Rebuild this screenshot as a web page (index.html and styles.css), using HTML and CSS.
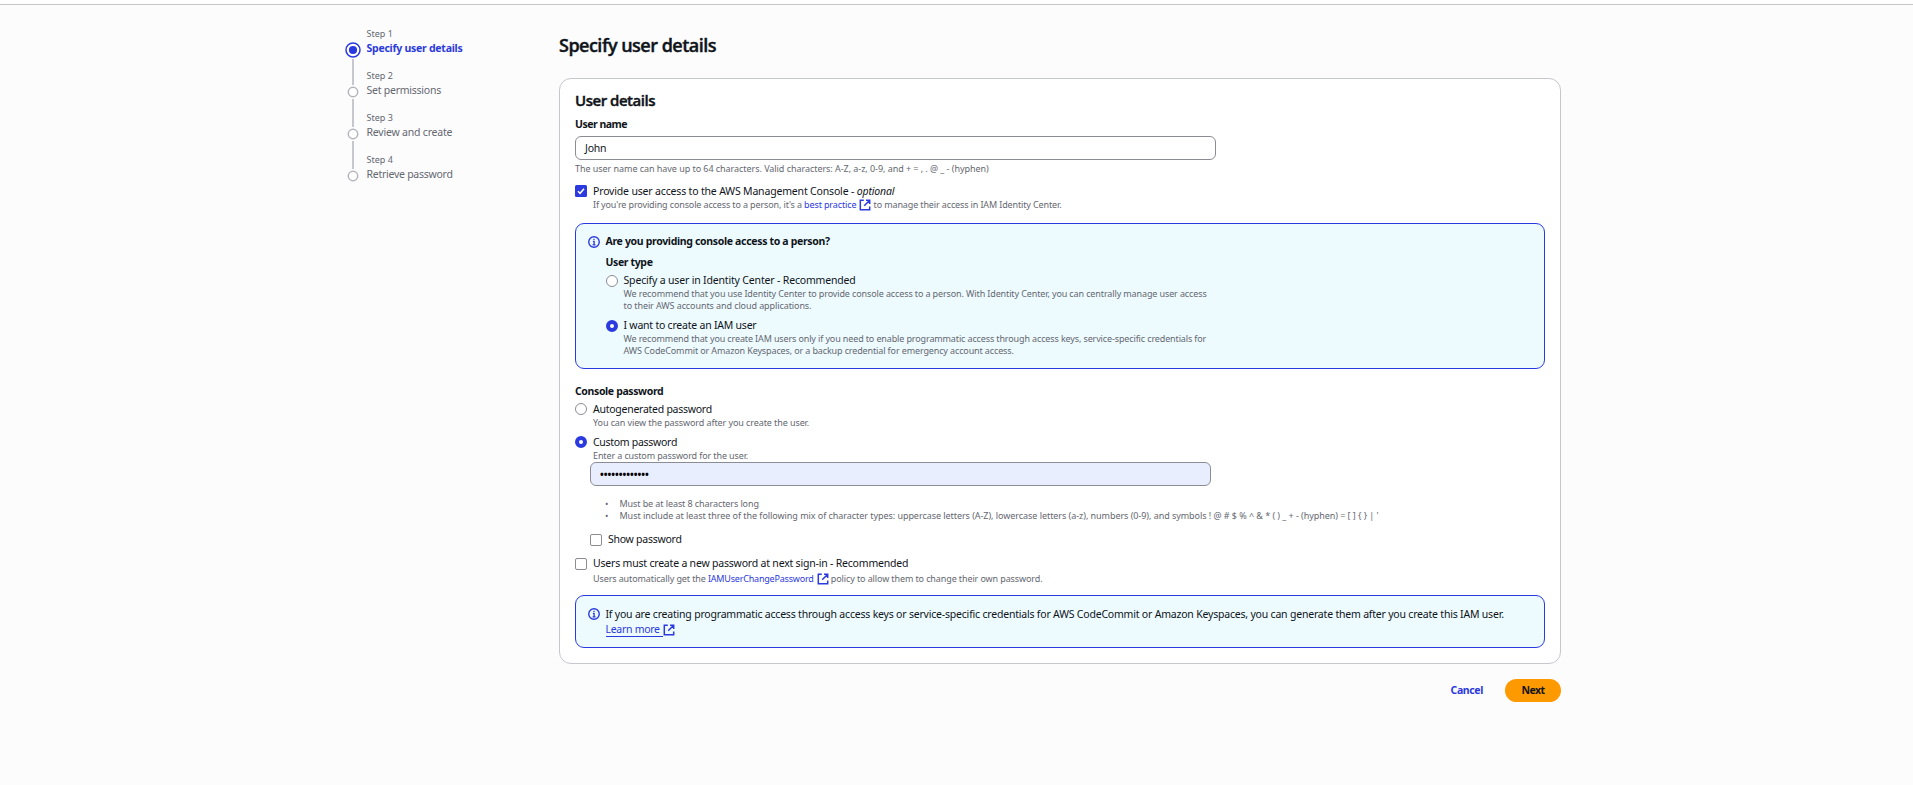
FILE: index.html
```
<!DOCTYPE html>
<html lang="en">
<head>
<meta charset="utf-8">
<title>Specify user details</title>
<link rel="stylesheet" href="styles.css">
</head>
<body>
<div class="topbar"></div>
<div class="layout">
  <nav class="steps">
    <div class="step active">
      <div class="rail"><svg class="dot" width="16" height="16" viewBox="0 0 16 16"><circle cx="8" cy="8" r="7" fill="#fff" stroke="#2b3ade" stroke-width="1.5"/><circle cx="8" cy="8" r="4.1" fill="#2b3ade"/></svg><span class="line"></span></div>
      <div class="step-text"><div class="step-no">Step 1</div><div class="step-name t26">Specify user details</div></div>
    </div>
    <div class="step">
      <div class="rail"><svg class="dot" width="12" height="12" viewBox="0 0 12 12"><circle cx="6" cy="6" r="4.7" fill="#fff" stroke="#b4b4bb" stroke-width="1.5"/></svg><span class="line"></span></div>
      <div class="step-text"><div class="step-no">Step 2</div><div class="step-name t24">Set permissions</div></div>
    </div>
    <div class="step">
      <div class="rail"><svg class="dot" width="12" height="12" viewBox="0 0 12 12"><circle cx="6" cy="6" r="4.7" fill="#fff" stroke="#b4b4bb" stroke-width="1.5"/></svg><span class="line"></span></div>
      <div class="step-text"><div class="step-no">Step 3</div><div class="step-name t20">Review and create</div></div>
    </div>
    <div class="step last">
      <div class="rail"><svg class="dot" width="12" height="12" viewBox="0 0 12 12"><circle cx="6" cy="6" r="4.7" fill="#fff" stroke="#b4b4bb" stroke-width="1.5"/></svg></div>
      <div class="step-text"><div class="step-no">Step 4</div><div class="step-name t26">Retrieve password</div></div>
    </div>
  </nav>

  <main class="main">
    <h1>Specify user details</h1>
    <section class="card">
      <h2>User details</h2>
      <div class="label t50">User name</div>
      <div class="input name-input t20">John</div>
      <p class="hint name-hint t05">The user name can have up to 64 characters. Valid characters: A-Z, a-z, 0-9, and + = , . @ _ - (hyphen)</p>

      <div class="choice access">
        <svg class="box" width="12" height="12" viewBox="0 0 12 12"><rect width="12" height="12" rx="1.5" fill="#2b3ade"/><path d="M3 6.2 5.1 8.3 9 3.8" fill="none" stroke="#fff" stroke-width="1.5"/></svg>
        <div class="choice-text">
          <div class="choice-label t17">Provide user access to the AWS Management Console - <i>optional</i></div>
          <p class="hint t13">If you're providing console access to a person, it's a <a class="link">best practice<svg class="ext" width="12" height="12" viewBox="0 0 12 12"><path d="M4.8 1.3H1.3V10.7H10.7V7.5M7 1.3h3.7V5M10.5 1.5 5.2 6.8" fill="none" stroke="currentColor" stroke-width="1.5"/></svg></a> to manage their access in IAM Identity Center.</p>
        </div>
      </div>

      <div class="alert person">
        <svg class="info" width="12" height="12" viewBox="0 0 12 12"><circle cx="6" cy="6" r="5.25" fill="none" stroke="#2b3ade" stroke-width="1.4"/><path d="M6 2.7v1.4M4.9 5.4H6.1V8.6M4.6 8.8h2.9" fill="none" stroke="#2b3ade" stroke-width="1.3"/></svg>
        <div class="alert-body">
          <div class="label t33">Are you providing console access to a person?</div>
          <div class="label type-label t37">User type</div>
          <div class="choice">
            <span class="radio"></span>
            <div class="choice-text">
              <div class="choice-label t17">Specify a user in Identity Center - Recommended</div>
              <p class="hint"><span class="t12">We recommend that you use Identity Center to provide console access to a person. With Identity Center, you can centrally manage user access</span><br><span class="t09">to their AWS accounts and cloud applications.</span></p>
            </div>
          </div>
          <div class="choice second">
            <span class="radio on"></span>
            <div class="choice-text">
              <div class="choice-label t22">I want to create an IAM user</div>
              <p class="hint t13">We recommend that you create IAM users only if you need to enable programmatic access through access keys, service-specific credentials for<br>AWS CodeCommit or Amazon Keyspaces, or a backup credential for emergency account access.</p>
            </div>
          </div>
        </div>
      </div>

      <div class="label pw-label t37">Console password</div>
      <div class="choice auto">
        <span class="radio"></span>
        <div class="choice-text">
          <div class="choice-label t26">Autogenerated password</div>
          <p class="hint t09">You can view the password after you create the user.</p>
        </div>
      </div>
      <div class="choice custom">
        <span class="radio on"></span>
        <div class="choice-text">
          <div class="choice-label t29">Custom password</div>
          <p class="hint t12">Enter a custom password for the user.</p>
        </div>
      </div>
      <div class="custom-block">
        <div class="input pw-input">•••••••••••••</div>
        <ul class="rules">
          <li><span class="t09">Must be at least 8 characters long</span></li>
          <li><span class="t05">Must include at least three of the following mix of character types: uppercase letters (A-Z), lowercase letters (a-z), numbers (0-9), and symbols ! @ # $ % ^ &amp; * ( ) _ + - (hyphen) = [ ] { } | '</span></li>
        </ul>
        <div class="choice">
          <span class="box empty"></span>
          <div class="choice-text"><div class="choice-label t26">Show password</div></div>
        </div>
      </div>

      <div class="choice reset">
        <span class="box empty"></span>
        <div class="choice-text">
          <div class="choice-label t20">Users must create a new password at next sign-in - Recommended</div>
          <p class="hint t11">Users automatically get the <a class="link t20">IAMUserChangePassword<svg class="ext" width="12" height="12" viewBox="0 0 12 12"><path d="M4.8 1.3H1.3V10.7H10.7V7.5M7 1.3h3.7V5M10.5 1.5 5.2 6.8" fill="none" stroke="currentColor" stroke-width="1.5"/></svg></a> policy to allow them to change their own password.</p>
        </div>
      </div>

      <div class="alert keys">
        <svg class="info" width="12" height="12" viewBox="0 0 12 12"><circle cx="6" cy="6" r="5.25" fill="none" stroke="#2b3ade" stroke-width="1.4"/><path d="M6 2.7v1.4M4.9 5.4H6.1V8.6M4.6 8.8h2.9" fill="none" stroke="#2b3ade" stroke-width="1.3"/></svg>
        <div class="alert-body t20">
          If you are creating programmatic access through access keys or service-specific credentials for AWS CodeCommit or Amazon Keyspaces, you can generate them after you create this IAM user.<br>
          <a class="link more"><span class="underlined t29">Learn more</span><svg class="ext" width="12" height="12" viewBox="0 0 12 12"><path d="M4.8 1.3H1.3V10.7H10.7V7.5M7 1.3h3.7V5M10.5 1.5 5.2 6.8" fill="none" stroke="currentColor" stroke-width="1.5"/></svg></a>
        </div>
      </div>
    </section>
    <div class="actions"><a class="cancel t37">Cancel</a><a class="next t50">Next</a></div>
  </main>
</div>
</body>
</html>
```
FILE: styles.css
```
* { box-sizing: border-box; }
body {
  margin: 0;
  min-height: 785px;
  background: #fcfcfd;
  color: #0f141a;
  font: 10.5px/15px "Noto Sans", "Open Sans", sans-serif;
}
h1, h2, p, ul { margin: 0; padding: 0; }

/* text tracking */
.t05 { letter-spacing: -0.05px; }
.t09 { letter-spacing: -0.09px; }
.t11 { letter-spacing: -0.11px; }
.t12 { letter-spacing: -0.12px; }
.t13 { letter-spacing: -0.13px; }
.t17 { letter-spacing: -0.17px; }
.t20 { letter-spacing: -0.2px; }
.t22 { letter-spacing: -0.22px; }
.t24 { letter-spacing: -0.24px; }
.t26 { letter-spacing: -0.26px; }
.t29 { letter-spacing: -0.29px; }
.t33 { letter-spacing: -0.33px; }
.t37 { letter-spacing: -0.37px; }
.t50 { letter-spacing: -0.5px; }

.topbar { height: 5px; background: #fff; border-bottom: 1px solid #c6c6cd; }
.layout { display: flex; padding-left: 345px; }

.steps { width: 214px; padding-top: 23px; }
.step { display: flex; height: 42px; color: #656871; }
.rail { width: 16px; display: flex; flex-direction: column; align-items: center; padding-top: 13.5px; }
.step:not(.active) .rail { padding-top: 15.5px; }
.dot { flex: none; display: block; }
.line { width: 2px; height: 28px; flex: none; margin-top: 1px; background: #c6c6cd; }
.active .line { height: 26px; }
.step-text { padding-left: 5.5px; white-space: nowrap; }
.step-no { font-size: 9px; line-height: 12px; }
.step-name { line-height: 15px; margin-top: 1px; }
.active .step-name { color: #2b3ade; font-weight: 700; }

.main { width: 1002px; }
h1, h2 { font-family: "Open Sans", "Noto Sans", sans-serif; font-weight: 600; -webkit-text-stroke: 0.4px #0f141a; }
h1 { font-size: 18px; line-height: 24px; margin-top: 28px; letter-spacing: -0.51px; }
.card { margin-top: 21px; height: 586px; padding: 12px 15px; border: 1px solid #c6c6cd; border-radius: 12px; background: #fff; }
h2 { font-size: 15px; line-height: 18px; letter-spacing: -0.48px; }
.label { font-weight: 700; line-height: 15px; }
.alert .label, .pw-label, .choice-label { height: 15px; line-height: 16px; }
.card > h2 + .label { margin-top: 8px; }
.input { height: 24px; border: 1px solid #8c8c94; border-radius: 6px; padding: 4px 9px; line-height: 15px; }
.name-input { width: 641px; margin-top: 4px; }
.hint { font-size: 9px; line-height: 12px; color: #656871; white-space: nowrap; }
.name-hint { margin-top: 3px; }

.choice { display: flex; gap: 6px; }
.choice-label { white-space: nowrap; }
.choice-text .hint { margin-top: 1px; margin-bottom: -1px; }
.box, .radio { flex: none; width: 12px; height: 12px; margin-top: 2px; background: #fff; }
.box.empty { border: 1px solid #8c8c94; border-radius: 2px; margin-top: 3px; }
.radio { border: 1px solid #8c8c94; border-radius: 50%; }
.radio.on { border: 4px solid #2b3ade; }
.alert .radio { margin-top: 3px; }
.access { margin-top: 8px; }
.link { color: #2b3ade; }
.ext { margin-left: 3px; margin-bottom: -1px; vertical-align: -2px; }

.alert { display: flex; gap: 5.5px; border: 1px solid #2b3ade; border-radius: 9px; background: #edfbff; padding: 10px 12px; white-space: nowrap; }
.info { flex: none; margin-top: 2px; }
.person { height: 146px; margin-top: 13px; padding-top: 9px; }
.person .info { margin-top: 3px; }
.alert .type-label { margin-top: 6px; margin-bottom: 3px; }
.second { margin-top: 6px; }

.pw-label { margin-top: 14px; }
.auto { margin-top: 3px; }
.custom { margin-top: 6px; }
.custom-block { padding-left: 15px; margin-top: 1px; }
.pw-input { width: 621px; background: #e8eefe; color: #000; font-size: 10px; font-weight: 700; }
.rules { list-style: none; margin: 12px 0 9px 15px; font-size: 9px; line-height: 12px; color: #656871; white-space: nowrap; }
.rules li::before { content: "•"; display: inline-block; width: 14.5px; }
.reset { margin-top: 9px; }
.choice.reset .hint { margin-top: 3px; margin-bottom: 0; }
.keys { margin-top: 10px; height: 53px; padding-top: 11px; }
.keys .info { margin-top: 1px; }
.underlined { border-bottom: 1px solid #2b3ade; padding-right: 3px; }
.more .ext { margin-left: 0.5px; }
.actions { display: flex; justify-content: flex-end; align-items: center; gap: 22px; margin-top: 15px; font-weight: 700; }
.cancel { color: #2b3ade; }
.next { width: 56px; height: 23px; border-radius: 12px; background: #ff9900; text-align: center; line-height: 22px; }
```
